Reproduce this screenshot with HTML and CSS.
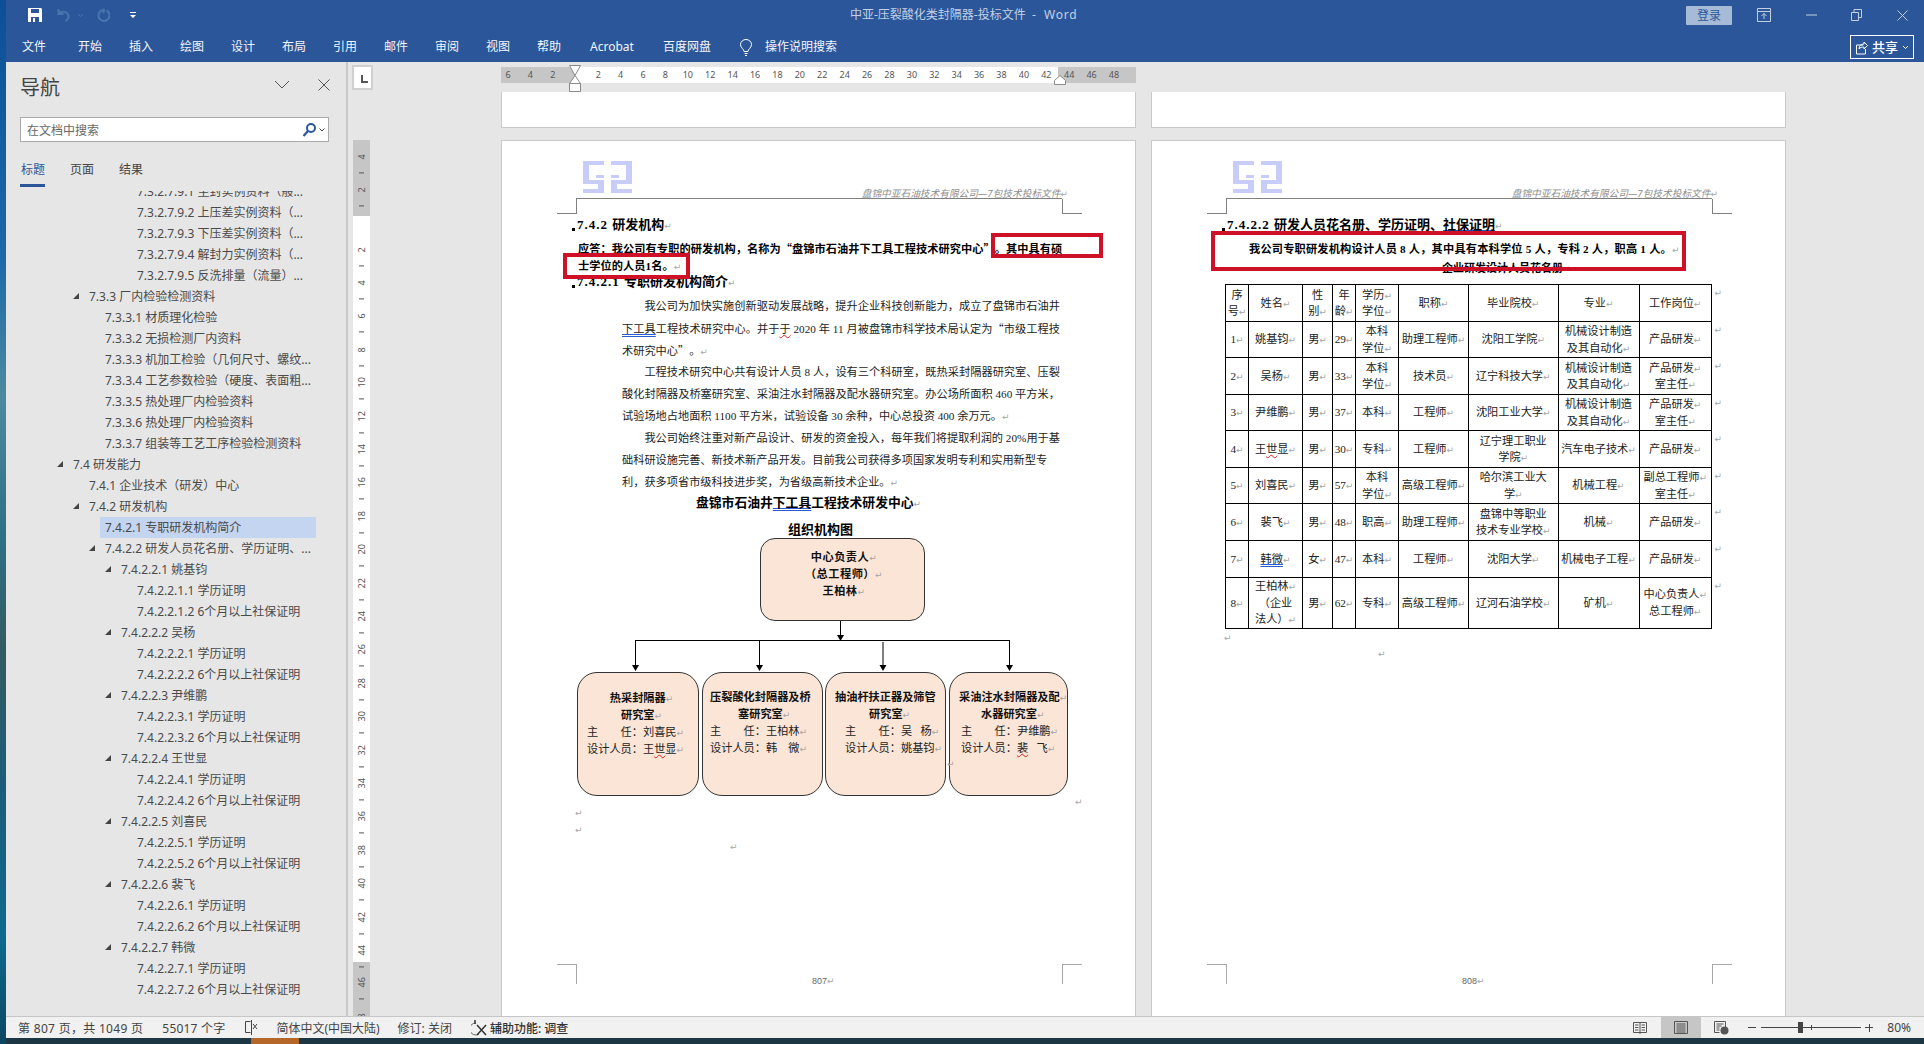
FILE: index.html
```html
<!DOCTYPE html>
<html lang="zh-CN">
  <head>
    <meta charset="UTF-8" />
    <title>中亚-压裂酸化类封隔器-投标文件 - Word</title>
    <link rel="stylesheet" href="styles.css">
  </head>
  <body>
    <div class="desktop-edge"></div>
    <div class="window">
      <div class="titlebar">
        <div class="quick">
          <svg class="qa-save" width="14" height="14" viewBox="0 0 14 14"><path d="M0 0h13l1 1v13H0z" fill="#fff"/><path d="M3 1h8v4H3z M3 9h8v5H3z" fill="#2b579a"/><path d="M5 10h2v4H5z" fill="#fff"/></svg>
          <svg class="qa-undo" width="14" height="14" viewBox="0 0 14 14"><path d="M1.500 1v5h5 M1.500 5.500c3-3 9-2 10 2 .5 2.500-1 4.500-3 5.500" fill="none" stroke="#4a74ad" stroke-width="2"/></svg>
          <svg class="qa-caret" width="7" height="5" viewBox="0 0 7 5"><path d="M1 1l2.500 2.500L6 1" fill="none" stroke="#4a74ad"/></svg>
          <svg class="qa-redo" width="14" height="15" viewBox="0 0 14 15"><path d="M9 2.500h-3.500a5.500 5.500 0 1 0 5 0 M7.500 .5v5" fill="none" stroke="#4a74ad" stroke-width="2"/></svg>
          <svg class="qa-more" width="6" height="8" viewBox="0 0 6 8"><path d="M0 1h6v1H0z M0 4h6L3 7z" fill="#fff"/></svg>
        </div>
        <div class="doc-title">中亚-压裂酸化类封隔器-投标文件&nbsp; -&nbsp; <span class="word">Word</span></div>
        <div class="win-controls">
          <span class="login">登录</span>
          <svg class="wc-opt" width="14" height="14" viewBox="0 0 14 14"><path d="M.5.500h13v13H.500z M.5 3.500h13 M7 11V5.500 M4.500 8 7 5.500 9.500 8" fill="none" stroke="#c3d0e4"/></svg>
          <svg class="wc-min" width="11" height="2" viewBox="0 0 11 2"><path d="M0 1h11" stroke="#c3d0e4"/></svg>
          <svg class="wc-max" width="11" height="12" viewBox="0 0 11 12"><path d="M.5 3.500h7v8h-7z M3 3.500V.500h7.500v8H8" fill="none" stroke="#c3d0e4"/></svg>
          <svg class="wc-close" width="11" height="11" viewBox="0 0 11 11"><path d="M.5.500l10 10 M10.500.500l-10 10" stroke="#c3d0e4"/></svg>
        </div>
      </div>
      <div class="tabs">
        <span class="tab tab-file">文件</span>
        <span class="tab">开始</span>
        <span class="tab">插入</span>
        <span class="tab">绘图</span>
        <span class="tab">设计</span>
        <span class="tab">布局</span>
        <span class="tab">引用</span>
        <span class="tab">邮件</span>
        <span class="tab">审阅</span>
        <span class="tab">视图</span>
        <span class="tab">帮助</span>
        <span class="tab tab-acrobat">Acrobat</span>
        <span class="tab tab-pan">百度网盘</span>
        <svg class="bulb" width="12" height="17" viewBox="0 0 12 17"><path d="M4 12.500h4c0-2.500 3.500-3.500 3.500-7a5.500 5 0 0 0-11 0c0 3.500 3.500 4.500 3.500 7z M4.500 14.500h3 M5 16.500h2" fill="none" stroke="#fff"/></svg>
        <span class="tab tab-search">操作说明搜索</span>
        <span class="share">
          <svg width="13" height="16" viewBox="0 0 13 16"><path d="M8 6H1.500v9h9v-5 M4 10c0-3 2-5 5-5V3l3.500 3.500L9 10V8c-2 0-4 .500-5 2z" fill="none" stroke="#fff"/></svg>
          <b>共享</b>
          <svg width="7" height="5" viewBox="0 0 7 5"><path d="M1 1l2.500 2.500L6 1" fill="none" stroke="#fff"/></svg>
        </span>
      </div>

      <div class="main">
        <aside class="nav">
          <div class="nav-head">
            <span class="nav-title">导航</span>
            <svg class="nav-drop" width="16" height="9" viewBox="0 0 16 9"><path d="M1 1l7 7 7-7" fill="none" stroke="#555"/></svg>
            <svg class="nav-close" width="12" height="12" viewBox="0 0 12 12"><path d="M.5.500l11 11 M11.500.500l-11 11" stroke="#555"/></svg>
          </div>
          <div class="nav-search">
            <span>在文档中搜索</span>
            <svg width="15" height="15" viewBox="0 0 15 15"><circle cx="9" cy="6" r="4" fill="none" stroke="#2b579a" stroke-width="2"/><path d="M6 9l-4.500 5" stroke="#2b579a" stroke-width="2.200"/></svg>
            <svg width="6" height="4" viewBox="0 0 6 4"><path d="M.5.500L3 3 5.500.500" fill="none" stroke="#444"/></svg>
          </div>
          <div class="nav-tabs">
            <span class="nav-tab active">标题</span>
            <span class="nav-tab">页面</span>
            <span class="nav-tab">结果</span>
          </div>
          <div class="nav-list">
            <div class="row l5">7.3.2.7.9.1 坐封实例资料（般...</div>
            <div class="row l5">7.3.2.7.9.2 上压差实例资料（...</div>
            <div class="row l5">7.3.2.7.9.3 下压差实例资料（...</div>
            <div class="row l5">7.3.2.7.9.4 解封力实例资料（...</div>
            <div class="row l5">7.3.2.7.9.5 反洗排量（流量）...</div>
            <div class="row l2 open">7.3.3 厂内检验检测资料</div>
            <div class="row l3">7.3.3.1 材质理化检验</div>
            <div class="row l3">7.3.3.2 无损检测厂内资料</div>
            <div class="row l3">7.3.3.3 机加工检验（几何尺寸、螺纹...</div>
            <div class="row l3">7.3.3.4 工艺参数检验（硬度、表面粗...</div>
            <div class="row l3">7.3.3.5 热处理厂内检验资料</div>
            <div class="row l3">7.3.3.6 热处理厂内检验资料</div>
            <div class="row l3">7.3.3.7 组装等工艺工序检验检测资料</div>
            <div class="row l1 open">7.4 研发能力</div>
            <div class="row l2">7.4.1 企业技术（研发）中心</div>
            <div class="row l2 open">7.4.2 研发机构</div>
            <div class="row l3 current">7.4.2.1 专职研发机构简介</div>
            <div class="row l3 open">7.4.2.2 研发人员花名册、学历证明、...</div>
            <div class="row l4 open">7.4.2.2.1 姚基钧</div>
            <div class="row l5">7.4.2.2.1.1 学历证明</div>
            <div class="row l5">7.4.2.2.1.2 6个月以上社保证明</div>
            <div class="row l4 open">7.4.2.2.2 吴杨</div>
            <div class="row l5">7.4.2.2.2.1 学历证明</div>
            <div class="row l5">7.4.2.2.2.2 6个月以上社保证明</div>
            <div class="row l4 open">7.4.2.2.3 尹维鹏</div>
            <div class="row l5">7.4.2.2.3.1 学历证明</div>
            <div class="row l5">7.4.2.2.3.2 6个月以上社保证明</div>
            <div class="row l4 open">7.4.2.2.4 王世显</div>
            <div class="row l5">7.4.2.2.4.1 学历证明</div>
            <div class="row l5">7.4.2.2.4.2 6个月以上社保证明</div>
            <div class="row l4 open">7.4.2.2.5 刘喜民</div>
            <div class="row l5">7.4.2.2.5.1 学历证明</div>
            <div class="row l5">7.4.2.2.5.2 6个月以上社保证明</div>
            <div class="row l4 open">7.4.2.2.6 裴飞</div>
            <div class="row l5">7.4.2.2.6.1 学历证明</div>
            <div class="row l5">7.4.2.2.6.2 6个月以上社保证明</div>
            <div class="row l4 open">7.4.2.2.7 韩微</div>
            <div class="row l5">7.4.2.2.7.1 学历证明</div>
            <div class="row l5">7.4.2.2.7.2 6个月以上社保证明</div>
          </div>
        </aside>

        <div class="v-ruler-col">
          <div class="ruler-corner"><span class="tab-stop"></span></div>
          <div class="v-ruler">
            <div class="v-gray-top">
              <span class="vn">4</span><span class="vn">2</span>
            </div>
            <div class="v-white">
              <span class="vn">2</span><span class="vn">4</span><span class="vn">6</span><span class="vn">8</span><span class="vn">10</span><span class="vn">12</span><span class="vn">14</span><span class="vn">16</span><span class="vn">18</span><span class="vn">20</span><span class="vn">22</span><span class="vn">24</span><span class="vn">26</span><span class="vn">28</span><span class="vn">30</span><span class="vn">32</span><span class="vn">34</span><span class="vn">36</span><span class="vn">38</span><span class="vn">40</span><span class="vn">42</span><span class="vn">44</span>
            </div>
            <div class="v-gray-bottom">
              <span class="vn">46</span><span class="vn">8</span>
            </div>
          </div>
        </div>

        <div class="doc-area">
          <div class="h-ruler">
            <div class="h-gray-left"><span>6</span><span>4</span><span>2</span></div>
            <div class="h-white"><span>2</span><span>4</span><span>6</span><span>8</span><span>10</span><span>12</span><span>14</span><span>16</span><span>18</span><span>20</span><span>22</span><span>24</span><span>26</span><span>28</span><span>30</span><span>32</span><span>34</span><span>36</span><span>38</span><span>40</span><span>42</span></div>
            <div class="h-gray-right"><span>44</span><span>46</span><span>48</span></div>
            <svg class="indent-mark left-mark" width="12" height="28" viewBox="0 0 12 28"><path d="M.5.500h11L6 10.500z M6 10.500l5.500 8H.500z M.5 18.500h11v8H.500z" fill="#fff" stroke="#8a8a8a"/></svg>
            <svg class="indent-mark right-mark" width="12" height="10" viewBox="0 0 12 10"><path d="M6 .5l5.500 5v4H.500v-4z" fill="#fff" stroke="#8a8a8a"/></svg>
          </div>
          <div class="stubs">
            <div class="stub"></div>
            <div class="stub"></div>
          </div>
          <div class="pages">
            <section class="page">
              <i class="crop tl"></i><i class="crop tr"></i><i class="crop bl"></i><i class="crop br"></i>
              <header class="page-head">
                <svg class="logo" width="49" height="32" viewBox="0 0 49 32"><path d="M0 0H21V4H6V19H21V32H0V28H15V23H0z M28 0H49V23H34V28H49V32H28V19H43V4H28z M13 14h8v3h-8z M28 14h8v3h-8z" fill="#c8ccf8"/></svg>
                <span class="head-note">盘锦中亚石油技术有限公司—7包技术投标文件<u class="pm">↵</u></span>
              </header>
              <h3 class="sec"><i class="mark"></i><span class="num">7.4.2 </span>研发机构<u class="pm">↵</u></h3>
              <p class="answer">应答：我公司有专职的研发机构，名称为<span class="cq ql">“</span>盘锦市石油井下工具工程技术研究中心<span class="cq qr">”</span>。其中具有硕</p>
              <p class="answer">士学位的人员1名。<u class="pm">↵</u></p>
              <h3 class="sec sec-sub"><i class="mark"></i><span class="num">7.4.2.1 </span>专职研发机构简介<u class="pm">↵</u></h3>
              <div class="body-text">
                <p class="first full">我公司为加快实施创新驱动发展战略，提升企业科技创新能力，成立了盘锦市石油井</p>
                <p class="full"><span class="dbl-blue">下工具</span>工程技术研究中心。并于<span class="wavy-red">于</span> 2020 年 11 月被盘锦市科学技术局认定为<span class="cq ql">“</span>市级工程技</p>
                <p>术研究中心<span class="cq qr">”</span>。<u class="pm">↵</u></p>
                <p class="first full">工程技术研究中心共有设计人员 8 人，设有三个科研室，既热采封隔器研究室、压裂</p>
                <p class="full">酸化封隔器及桥塞研究室、采油注水封隔器及配水器研究室。办公场所面积 460 平方米，</p>
                <p>试验场地占地面积 1100 平方米，试验设备 30 余种，中心总投资 400 余万元。<u class="pm">↵</u></p>
                <p class="first full">我公司始终注重对新产品设计、研发的资金投入，每年我们将提取利润的 20%用于基</p>
                <p>础科研设施完善、新技术新产品开发。目前我公司获得多项国家发明专利和实用新型专</p>
                <p>利，获多项省市级科技进步奖，为省级高新技术企业。<u class="pm">↵</u></p>
              </div>
              <h2 class="org-title">盘锦市石油井<span class="dbl-blue">下工具</span>工程技术研发中心<u class="pm">↵</u></h2>
              <h2 class="org-title org-title-2">组织机构图</h2>

              <div class="org">
                <svg class="org-lines" width="634" height="60" viewBox="0 0 634 60">
                  <path d="M338.500 0V16 M133 20.500H507.500 M133.500 20V46 M257.500 20V46 M381 22V46 M507.500 20V46" fill="none" stroke="#000" stroke-width="1"/>
                  <path d="M335 15h7l-3.500 6z M130 45h7l-3.500 6z M254 45h7l-3.500 6z M377.500 45h7l-3.500 6z M504 45h7l-3.500 6z" fill="#000"/>
                </svg>
                <div class="node node-top">
                  <p>中心负责人<u class="pm">↵</u></p>
                  <p>（总工程师）<u class="pm">↵</u></p>
                  <p>王柏林<u class="pm">↵</u></p>
                </div>
                <div class="node node-a">
                  <p class="ttl">热采封隔器<u class="pm">↵</u></p>
                  <p class="ttl">研究室<u class="pm">↵</u></p>
                  <p>主<span class="sp"></span>任：刘喜民<u class="pm">↵</u></p>
                  <p>设计人员：王<span class="wavy-red">世</span>显<u class="pm">↵</u></p>
                </div>
                <div class="node node-b">
                  <p class="ttl">压裂酸化封隔器及桥</p>
                  <p class="ttl">塞研究室<u class="pm">↵</u></p>
                  <p>主<span class="sp"></span>任：王柏林<u class="pm">↵</u></p>
                  <p>设计人员：韩&nbsp; &nbsp; 微<u class="pm">↵</u></p>
                </div>
                <div class="node node-c">
                  <p class="ttl">抽油杆扶正器及筛管</p>
                  <p class="ttl">研究室<u class="pm">↵</u></p>
                  <p>主<span class="sp"></span>任：吴&nbsp; &nbsp;杨<u class="pm">↵</u></p>
                  <p>设计人员：姚基钧<u class="pm">↵</u></p>
                </div>
                <div class="node node-d">
                  <p class="ttl">采油注水封隔器及配<u class="pm">↵</u></p>
                  <p class="ttl">水器研究室<u class="pm">↵</u></p>
                  <p>主<span class="sp"></span>任：尹维鹏<u class="pm">↵</u></p>
                  <p>设计人员：<span class="wavy-red">裴</span>&nbsp; &nbsp;飞<u class="pm">↵</u></p>
                </div>
                <u class="pm free m1">↵</u>
                <u class="pm free m2">↵</u>
                <u class="pm free m3">↵</u>
                <u class="pm free m4">↵</u>
                <u class="pm free m5">↵</u>
              </div>
              <div class="page-no">807<u class="pm">↵</u></div>
              <div class="redbox rb1"></div>
              <div class="redbox rb2"></div>
            </section>

            <section class="page">
              <i class="crop tl"></i><i class="crop tr"></i><i class="crop bl"></i><i class="crop br"></i>
              <header class="page-head">
                <svg class="logo" width="49" height="32" viewBox="0 0 49 32"><path d="M0 0H21V4H6V19H21V32H0V28H15V23H0z M28 0H49V23H34V28H49V32H28V19H43V4H28z M13 14h8v3h-8z M28 14h8v3h-8z" fill="#c8ccf8"/></svg>
                <span class="head-note">盘锦中亚石油技术有限公司—7包技术投标文件<u class="pm">↵</u></span>
              </header>
              <h3 class="sec"><i class="mark"></i><span class="num">7.4.2.2 </span>研发人员花名册、学历证明、<span class="dbl-blue">社保证明</span><u class="pm">↵</u></h3>
              <p class="answer answer-center">我公司专职研发机构设计人员 8 人，其中具有本科学位 5 人，专科 2 人，职高 1 人。<u class="pm">↵</u></p>
              <p class="table-title">企业研发设计人员花名册<u class="pm">↵</u></p>
              <table class="staff">
                <colgroup>
                  <col class="c1"><col class="c2"><col class="c3"><col class="c4"><col class="c5"><col class="c6"><col class="c7"><col class="c8"><col class="c9">
                </colgroup>
                <tr class="r0"><td>序<br>号<u class="pm">↵</u></td><td>姓名<u class="pm">↵</u></td><td>性<br>别<u class="pm">↵</u></td><td>年<br>龄<u class="pm">↵</u></td><td>学历<u class="pm">↵</u><br>学位<u class="pm">↵</u></td><td>职称<u class="pm">↵</u></td><td>毕业院校<u class="pm">↵</u></td><td>专业<u class="pm">↵</u></td><td>工作岗位<u class="pm">↵</u></td></tr>
                <tr class="r1"><td>1<u class="pm">↵</u></td><td>姚基钧<u class="pm">↵</u></td><td>男<u class="pm">↵</u></td><td>29<u class="pm">↵</u></td><td>本科<br>学位<u class="pm">↵</u></td><td>助理工程师<u class="pm">↵</u></td><td>沈阳工学院<u class="pm">↵</u></td><td>机械设计制造<br>及其自动化<u class="pm">↵</u></td><td>产品研发<u class="pm">↵</u></td></tr>
                <tr class="r2"><td>2<u class="pm">↵</u></td><td>吴杨<u class="pm">↵</u></td><td>男<u class="pm">↵</u></td><td>33<u class="pm">↵</u></td><td>本科<br>学位<u class="pm">↵</u></td><td>技术员<u class="pm">↵</u></td><td>辽宁科技大学<u class="pm">↵</u></td><td>机械设计制造<br>及其自动化<u class="pm">↵</u></td><td>产品研发<u class="pm">↵</u><br>室主任<u class="pm">↵</u></td></tr>
                <tr class="r3"><td>3<u class="pm">↵</u></td><td>尹维鹏<u class="pm">↵</u></td><td>男<u class="pm">↵</u></td><td>37<u class="pm">↵</u></td><td>本科<u class="pm">↵</u></td><td>工程师<u class="pm">↵</u></td><td>沈阳工业大学<u class="pm">↵</u></td><td>机械设计制造<br>及其自动化<u class="pm">↵</u></td><td>产品研发<u class="pm">↵</u><br>室主任<u class="pm">↵</u></td></tr>
                <tr class="r4"><td>4<u class="pm">↵</u></td><td>王<span class="wavy-red">世</span>显<u class="pm">↵</u></td><td>男<u class="pm">↵</u></td><td>30<u class="pm">↵</u></td><td>专科<u class="pm">↵</u></td><td>工程师<u class="pm">↵</u></td><td>辽宁理工职业<br>学院<u class="pm">↵</u></td><td>汽车电子技术<u class="pm">↵</u></td><td>产品研发<u class="pm">↵</u></td></tr>
                <tr class="r5"><td>5<u class="pm">↵</u></td><td>刘喜民<u class="pm">↵</u></td><td>男<u class="pm">↵</u></td><td>57<u class="pm">↵</u></td><td>本科<br>学位<u class="pm">↵</u></td><td>高级工程师<u class="pm">↵</u></td><td>哈尔滨工业大<br>学<u class="pm">↵</u></td><td>机械工程<u class="pm">↵</u></td><td>副总工程师<u class="pm">↵</u><br>室主任<u class="pm">↵</u></td></tr>
                <tr class="r6"><td>6<u class="pm">↵</u></td><td>裴飞<u class="pm">↵</u></td><td>男<u class="pm">↵</u></td><td>48<u class="pm">↵</u></td><td>职高<u class="pm">↵</u></td><td>助理工程师<u class="pm">↵</u></td><td>盘锦中等职业<br>技术专业学校<u class="pm">↵</u></td><td>机械<u class="pm">↵</u></td><td>产品研发<u class="pm">↵</u></td></tr>
                <tr class="r7"><td>7<u class="pm">↵</u></td><td><span class="dbl-blue">韩微</span><u class="pm">↵</u></td><td>女<u class="pm">↵</u></td><td>47<u class="pm">↵</u></td><td>本科<u class="pm">↵</u></td><td>工程师<u class="pm">↵</u></td><td>沈阳大学<u class="pm">↵</u></td><td>机械电子工程<u class="pm">↵</u></td><td>产品研发<u class="pm">↵</u></td></tr>
                <tr class="r8"><td>8<u class="pm">↵</u></td><td>王柏林<u class="pm">↵</u><br>（企业<br>法人）<u class="pm">↵</u></td><td>男<u class="pm">↵</u></td><td>62<u class="pm">↵</u></td><td>专科<u class="pm">↵</u></td><td>高级工程师<u class="pm">↵</u></td><td>辽河石油学校<u class="pm">↵</u></td><td>矿机<u class="pm">↵</u></td><td>中心负责人<u class="pm">↵</u><br>总工程师<u class="pm">↵</u></td></tr>
              </table>
              <u class="pm free t1">↵</u>
              <u class="pm free t2">↵</u>
              <div class="page-no">808<u class="pm">↵</u></div>
              <div class="redbox rb3"></div>
            </section>
          </div>
        </div>
      </div>

      <footer class="status">
        <span class="st st-page">第 807 页，共 1049 页</span>
        <span class="st st-words">55017 个字</span>
        <svg class="st-book" width="14" height="15" viewBox="0 0 14 15"><path d="M6.500 1.500h-5v11h5 M7.500 0v15 M9 4l4 5 M13 4L9 9" fill="none" stroke="#444"/></svg>
        <span class="st st-lang">简体中文(中国大陆)</span>
        <span class="st st-rev">修订: 关闭</span>
        <svg class="st-acc" width="16" height="17" viewBox="0 0 16 17"><path d="M5 4a6 6 0 1 0 3 11" fill="none" stroke="#666"/><path d="M4 1v4 M6 6l9 10 M15 6L6 16" stroke="#333" stroke-width="1.500"/></svg>
        <span class="st st-acc-text">辅助功能: 调查</span>
        <div class="st-right">
          <svg class="vw-read" width="14" height="13" viewBox="0 0 14 13"><path d="M.5 1.500h13v10H.500z M7 1v12 M2 4h3.500 M2 6.500h3.500 M2 9h3.500 M8.500 4H12 M8.500 6.500H12 M8.500 9H12" fill="none" stroke="#555"/></svg>
          <span class="vw-print"><svg width="14" height="13" viewBox="0 0 14 13"><path d="M.5.500h13v12H.500z M2.500 3h9 M2.500 5h9 M2.500 7h9 M2.500 9h9 M2.500 11h9" fill="none" stroke="#555"/></svg></span>
          <svg class="vw-web" width="15" height="14" viewBox="0 0 15 14"><path d="M.5.500h11v6 M.5.500v11h5 M2.500 3h7 M2.500 5h5 M2.500 7h3 M2.500 9h3" fill="none" stroke="#555"/><circle cx="10.500" cy="9.500" r="4" fill="#555"/></svg>
          <span class="zoom-minus"></span>
          <span class="slider"><i class="thumb"></i><i class="tick"></i></span>
          <span class="zoom-plus"></span>
          <span class="st zoom-val">80%</span>
        </div>
      </footer>
      <div class="taskbar"><span class="task-app"></span></div>
    </div>
  </body>
</html>
```

FILE: styles.css
```css
* {
  box-sizing: border-box;
}
html, body {
  margin: 0;
  height: 100%;
  overflow: hidden;
}
body {
  display: flex;
  font-family: "Noto Sans", "Noto Sans CJK SC", sans-serif;
  font-size: 12px;
  color: #444;
  background: #e6e6e6;
}
p, h2, h3 {
  margin: 0;
}
u {
  text-decoration: none;
}

.desktop-edge {
  width: 6px;
  flex: none;
  background: linear-gradient(to bottom, #0c4f95 0%, #1c6aa8 25%, #4d8a9f 38%, #2d6f85 52%, #345c60 62%, #1d5c7a 75%, #0d6a8e 90%, #0c4660 100%);
}
.window {
  flex: 1;
  display: flex;
  flex-direction: column;
  min-width: 0;
}

/* title bar and tabs */
.titlebar {
  height: 30px;
  flex: none;
  background: #2b579a;
  display: flex;
  align-items: center;
  position: relative;
  color: #fff;
}
.quick {
  display: flex;
  align-items: center;
  padding-left: 22px;
}
.qa-undo { margin-left: 15px; }
.qa-caret { margin-left: 6px; }
.qa-redo { margin-left: 12px; }
.qa-more { margin-left: 20px; }
.doc-title {
  position: absolute;
  left: 844px;
  top: 7px;
  line-height: 16px;
  color: #c3d0e4;
  white-space: nowrap;
}
.word {
  letter-spacing: .8px;
  margin-left: 2px;
}
.win-controls {
  margin-left: auto;
  display: flex;
  align-items: center;
  padding-right: 16px;
}
.login {
  width: 46px;
  height: 19px;
  background: #a8bbd6;
  border-radius: 1px;
  color: #2b579a;
  font-size: 12px;
  line-height: 19px;
  text-align: center;
}
.wc-opt { margin-left: 25px; }
.wc-min { margin-left: 35px; }
.wc-max { margin-left: 34px; }
.wc-close { margin-left: 35px; }

.tabs {
  height: 32px;
  flex: none;
  background: #2b579a;
  display: flex;
  align-items: center;
  padding: 2px 10px 0 16px;
  color: #f2f5fa;
  font-size: 12px;
}
.tab {
  width: 25px;
  margin-right: 26px;
  white-space: nowrap;
  line-height: 30px;
}
.tab-file {
  margin-right: 31px;
}
.tab-acrobat {
  width: 46px;
  margin: 0 27px 0 2px;
}
.tab-pan {
  width: 49px;
  margin-right: 28px;
}
.bulb {
  margin-right: 13px;
}
.tab-search {
  width: auto;
  margin: 0;
}
.share {
  margin-left: auto;
  width: 64px;
  height: 24px;
  border: 1px solid #fff;
  display: flex;
  align-items: center;
  gap: 4px;
  padding-left: 4px;
  color: #fff;
}
.share b {
  font-weight: 500;
  font-size: 13px;
  line-height: 22px;
}

.main {
  flex: 1;
  min-height: 0;
  display: flex;
}

/* navigation pane */
.nav {
  width: 342px;
  flex: none;
  background: #e6e6e6;
  border-right: 2px solid #c9c9c9;
  display: flex;
  flex-direction: column;
  overflow: hidden;
}
.nav-head {
  height: 55px;
  flex: none;
  display: flex;
  align-items: center;
  padding: 0 0 4px 14px;
}
.nav-title {
  font-size: 20px;
  line-height: 28px;
  color: #444;
}
.nav-drop {
  margin: 0 0 6px 214px;
}
.nav-close {
  margin: 0 0 6px 28px;
}
.nav-search {
  height: 25px;
  width: 309px;
  flex: none;
  margin-left: 14px;
  background: #fff;
  border: 1px solid #ababab;
  display: flex;
  align-items: center;
  padding: 0 3px 0 6px;
  color: #666;
}
.nav-search span {
  flex: 1;
}
.nav-search svg + svg {
  margin-left: 2px;
}
.nav-tabs {
  flex: none;
  display: flex;
  height: 45px;
  padding: 17px 0 0 14px;
  gap: 24px;
}
.nav-tab {
  height: 28px;
  width: 25px;
  padding-left: 1px;
  line-height: 22px;
  white-space: nowrap;
  font-size: 12px;
}
.nav-tab.active {
  color: #2b579a;
  border-bottom: 3px solid #2b579a;
}
.nav-list {
  flex: 1;
  min-height: 0;
  overflow: hidden;
  margin-top: 4px;
}
.row {
  height: 21px;
  line-height: 21px;
  white-space: nowrap;
  position: relative;
  color: #4a4a4a;
}
.row:first-child {
  margin-top: -10px;
}
.l1 { padding-left: 67px; }
.l2 { padding-left: 83px; }
.l3 { padding-left: 99px; }
.l4 { padding-left: 115px; }
.l5 { padding-left: 131px; }
.row.open::before {
  content: "";
  position: absolute;
  top: 7px;
  margin-left: -16px;
  border-style: solid;
  border-width: 0 0 6px 6px;
  border-color: transparent transparent #444 transparent;
}
.row.current {
  background: #c3d5f0;
  margin-left: 94px;
  padding-left: 5px;
  width: 216px;
}

/* vertical ruler */
.v-ruler-col {
  width: 28px;
  flex: none;
  background: #e6e6e6;
}
.ruler-corner {
  height: 25px;
  margin: 3px 0 0 4px;
  width: 21px;
  background: #d0d0d0;
  padding: 2px;
}
.tab-stop {
  display: block;
  height: 21px;
  width: 17px;
  background: #fff;
  position: relative;
}
.tab-stop::after {
  content: "";
  position: absolute;
  left: 7px;
  top: 8px;
  width: 5px;
  height: 6px;
  border-left: 2px solid #555;
  border-bottom: 2px solid #555;
}
.v-ruler {
  margin: 50px 0 0 5px;
  width: 17px;
  height: 876px;
  overflow: hidden;
  display: flex;
  flex-direction: column;
  font-size: 9px;
  color: #555;
  background: #fff;
}
.v-gray-top {
  height: 76px;
  flex: none;
  background: #c6c6c6;
}
.v-white {
  height: 746px;
  flex: none;
  padding-top: 16.700px;
}
.v-gray-bottom {
  height: 54px;
  flex: none;
  background: #c6c6c6;
  padding-top: 4px;
}
.vn {
  display: flex;
  align-items: center;
  justify-content: center;
  height: 33.400px;
  writing-mode: vertical-rl;
  transform: rotate(180deg);
  position: relative;
  line-height: 17px;
  font-size: 9px;
}
.vn::before {
  content: "";
  position: absolute;
  left: 6px;
  top: 0;
  width: 5px;
  height: 1px;
  background: #555;
}

/* document area */
.doc-area {
  flex: 1;
  min-width: 0;
  background: #e6e6e6;
  overflow: hidden;
  padding-left: 125px;
}
.h-ruler {
  position: relative;
  display: flex;
  width: 635px;
  height: 16px;
  margin: 5px 0 9px;
  font-size: 9px;
  color: #555;
  line-height: 16px;
}
.h-ruler span {
  width: 22.420px;
  text-align: center;
  flex: none;
}
.h-gray-left {
  width: 74px;
  flex: none;
  display: flex;
  background: #c6c6c6;
  justify-content: flex-end;
  padding-right: 11px;
}
.h-white {
  width: 483px;
  flex: none;
  background: #fff;
  display: flex;
  padding-left: 12px;
}
.h-gray-right {
  width: 78px;
  flex: none;
  background: #c6c6c6;
  display: flex;
}
.indent-mark {
  position: absolute;
}
.left-mark {
  left: 68px;
  top: -2px;
}
.right-mark {
  left: 553px;
  top: 8px;
}

.stubs {
  display: flex;
  gap: 15px;
}
.stub {
  width: 635px;
  height: 36px;
  background: #fff;
  border: 1px solid #c9c9c9;
  border-top: none;
}
.pages {
  display: flex;
  gap: 15px;
  margin-top: 12px;
}
.page {
  width: 635px;
  height: 900px;
  background: #fff;
  border: 1px solid #c9c9c9;
  position: relative;
  padding: 21px 0 0 69px;
  color: #111;
  font-family: "Liberation Serif", "Noto Sans CJK SC", serif;
  font-size: 11.200px;
  flex: none;
}
.crop {
  position: absolute;
  width: 20px;
  height: 15px;
  border-color: #808080;
  border-style: solid;
  border-width: 0;
}
.crop.tl {
  left: 55px;
  top: 58px;
  border-right-width: 1px;
  border-bottom-width: 1px;
}
.crop.tr {
  left: 560px;
  top: 58px;
  border-left-width: 1px;
  border-bottom-width: 1px;
}
.crop.bl {
  left: 55px;
  top: 823px;
  border-right-width: 1px;
  border-top-width: 1px;
  height: 20px;
  border-color: #a8a8a8;
}
.crop.br {
  left: 560px;
  top: 823px;
  border-left-width: 1px;
  border-top-width: 1px;
  height: 20px;
  border-color: #a8a8a8;
}
.page-head {
  display: flex;
  align-items: flex-end;
  justify-content: space-between;
  height: 37px;
  margin-left: 5px;
  width: 486px;
  padding-left: 7px;
  border-bottom: 1px solid #808080;
}
.logo {
  margin-bottom: 5px;
  flex: none;
}
.head-note {
  font-family: "Noto Sans", "Noto Sans CJK SC", sans-serif;
  font-size: 9.700px;
  font-style: italic;
  color: #8c8c8c;
  line-height: 13px;
  margin: 0 -6px -2px 0;
}
.pm {
  font-family: "DejaVu Sans", sans-serif;
  font-weight: 400;
  font-style: normal;
  font-size: 9px;
  line-height: 1;
  color: #a6a6a6;
}
.sec {
  font-size: 13px;
  line-height: 18px;
  font-weight: 700;
  margin: 17px 0 0 6px;
  color: #000;
  position: relative;
  white-space: nowrap;
}
.sec .num {
  letter-spacing: 1px;
}
.sec .mark {
  position: absolute;
  left: -5px;
  top: 12px;
  width: 3px;
  height: 3px;
  background: #000;
}
.sec-sub {
  margin-top: -2px;
}
.answer {
  font-weight: 700;
  line-height: 17px;
  margin: 6px 0 0 7px;
  white-space: nowrap;
  color: #000;
  letter-spacing: .08px;
}
.answer + .answer {
  margin-top: 0;
}
.answer-center {
  margin: 7px 0 0 28px;
  letter-spacing: .2px;
}
.table-title {
  font-weight: 700;
  color: #000;
  line-height: 14px;
  margin: 3px 0 0 221px;
  font-size: 11px;
}
.cq {
  display: inline-block;
  width: 1em;
  font-family: "Noto Sans CJK SC", sans-serif;
}
.ql { text-align: right; }
.qr { text-align: left; }
.body-text {
  width: 438px;
  margin: 4px 0 0 51px;
  line-height: 22px;
  color: #222;
}
.body-text p {
  height: 22px;
  white-space: nowrap;
}
.body-text .full {
  white-space: normal;
  text-align: justify;
  text-align-last: justify;
}
.body-text .first {
  text-indent: 22.400px;
}
.dbl-blue {
  text-decoration: underline double #2a5bd0 1px;
}
.wavy-red {
  text-decoration: underline wavy #e02020 1px;
}
.org-title {
  font-size: 12.800px;
  font-weight: 700;
  line-height: 18px;
  margin: 1px 0 0 125px;
  color: #000;
}
.org-title-2 {
  font-size: 13px;
  margin: 9px 0 0 217px;
}

/* org chart, nodes sit on a free canvas */
.org {
  position: absolute;
  left: 0;
  top: 0;
  width: 100%;
  height: 100%;
  pointer-events: none;
  font-size: 11.200px;
}
.org-lines {
  position: absolute;
  left: 0;
  top: 479px;
}
.node {
  position: absolute;
  background: #fbe5d6;
  border: 1px solid #333;
  border-radius: 20px;
  line-height: 17px;
  color: #222;
  white-space: nowrap;
}
.node-top {
  left: 258px;
  top: 397px;
  width: 165px;
  height: 83px;
  border-radius: 15px;
  font-weight: 700;
  padding: 10px 0 0 3px;
  text-align: center;
  color: #111;
  letter-spacing: .5px;
}
.node .ttl {
  font-weight: 700;
  color: #111;
  text-align: center;
}
.node-a, .node-b, .node-c, .node-d {
  top: 531px;
  height: 124px;
}
.node-a {
  left: 75px;
  width: 122px;
  padding: 17px 0 0 9px;
}
.node-a .ttl { padding-left: 13px; padding-right: 15px; }
.node-b {
  left: 200px;
  width: 121px;
  padding: 16px 0 0 7px;
}
.node-b .ttl { text-align: left; }
.node-b .ttl + .ttl { padding-left: 28px; }
.node-c {
  left: 323px;
  width: 121px;
  padding: 16px 0 0 9px;
}
.node-c .ttl { text-align: left; }
.node-c .ttl + .ttl { padding-left: 34px; }
.node-c p:not(.ttl) { padding-left: 10px; }
.node-d {
  left: 447px;
  width: 119px;
  padding: 16px 0 0 9px;
}
.node-d .ttl { text-align: left; }
.node-d .ttl + .ttl { padding-left: 22px; }
.node-d p:not(.ttl) { padding-left: 2px; }
.sp {
  display: inline-block;
  width: 22.400px;
}
.free {
  position: absolute;
  line-height: 12px;
}
.m1 { left: 573px; top: 655px; }
.m2 { left: 73px; top: 666px; }
.m3 { left: 73px; top: 683px; }
.m4 { left: 228px; top: 700px; }
.m5 { left: 445px; top: 617px; }

/* staff table */
.staff {
  border-collapse: collapse;
  table-layout: fixed;
  width: 486px;
  margin: 9px 0 0 4px;
  line-height: 16.500px;
  color: #222;
}
.staff td {
  border: 1px solid #000;
  text-align: center;
  padding: 0;
  white-space: nowrap;
  position: relative;
}
.staff td:last-child::after {
  content: "↵";
  position: absolute;
  right: -11px;
  top: 2px;
  font-family: "DejaVu Sans", sans-serif;
  font-size: 9px;
  line-height: 12px;
  color: #a6a6a6;
}
.c1 { width: 23px; }
.c2 { width: 54px; }
.c3 { width: 30px; }
.c4 { width: 23px; }
.c5 { width: 43px; }
.c6 { width: 70px; }
.c7 { width: 89.500px; }
.c8 { width: 81px; }
.c9 { width: 72.500px; }
.r0 { height: 37px; }
.r1 { height: 36px; }
.r2 { height: 37px; }
.r3 { height: 36px; }
.r4 { height: 37px; }
.r5 { height: 36px; }
.r6 { height: 37px; }
.r7 { height: 37px; }
.r8 { height: 50px; }
.t1 { left: 72px; top: 491px; }
.t2 { left: 226px; top: 507px; }

.page-no {
  position: absolute;
  left: 310px;
  top: 834px;
  font-size: 9px;
  line-height: 12px;
  color: #666;
  font-family: "Liberation Sans", sans-serif;
}

/* reviewer's red boxes lie over the page */
.redbox {
  position: absolute;
  border: 4px solid #ce1126;
  pointer-events: none;
}
.rb1 {
  left: 489px;
  top: 92px;
  width: 112px;
  height: 25px;
}
.rb2 {
  left: 61px;
  top: 112px;
  width: 127px;
  height: 26px;
}
.rb3 {
  left: 59px;
  top: 90px;
  width: 475px;
  height: 40px;
}

/* status bar */
.status {
  height: 22px;
  flex: none;
  background: #f1f1f1;
  border-top: 1px solid #c6c6c6;
  display: flex;
  align-items: center;
  color: #444;
  font-size: 12px;
  padding-left: 12px;
}
.st {
  white-space: nowrap;
}
.st-page { letter-spacing: .3px; }
.st-words { margin-left: 19px; letter-spacing: .2px; }
.st-book { margin-left: 19px; }
.st-lang { margin-left: 18px; }
.st-rev { margin-left: 18px; }
.st-acc { margin-left: 19px; }
.st-acc-text {
  margin-left: 3px;
  font-weight: 500;
  color: #333;
}
.st-right {
  margin-left: auto;
  display: flex;
  align-items: center;
  height: 100%;
  padding-right: 13px;
}
.vw-print {
  width: 40px;
  height: 21px;
  background: #c6c6c6;
  display: flex;
  align-items: center;
  justify-content: center;
  margin: 0 13px 0 14px;
}
.zoom-minus {
  width: 8px;
  height: 1px;
  background: #444;
  margin-left: 19px;
}
.slider {
  width: 100px;
  height: 1px;
  background: #444;
  margin-left: 5px;
  position: relative;
}
.thumb {
  position: absolute;
  left: 37px;
  top: -5px;
  width: 5px;
  height: 11px;
  background: #444;
}
.tick {
  position: absolute;
  left: 50px;
  top: -2px;
  width: 1px;
  height: 5px;
  background: #444;
}
.zoom-plus {
  width: 8px;
  height: 8px;
  margin-left: 4px;
  background: linear-gradient(#444, #444) center / 100% 1px no-repeat, linear-gradient(#444, #444) center / 1px 100% no-repeat;
}
.zoom-val {
  margin-left: 14px;
  font-size: 12px;
}
.taskbar {
  height: 6px;
  flex: none;
  background: #1d3644;
  padding-left: 245px;
}
.task-app {
  display: block;
  width: 48px;
  height: 6px;
  background: #b5672a;
}
```
